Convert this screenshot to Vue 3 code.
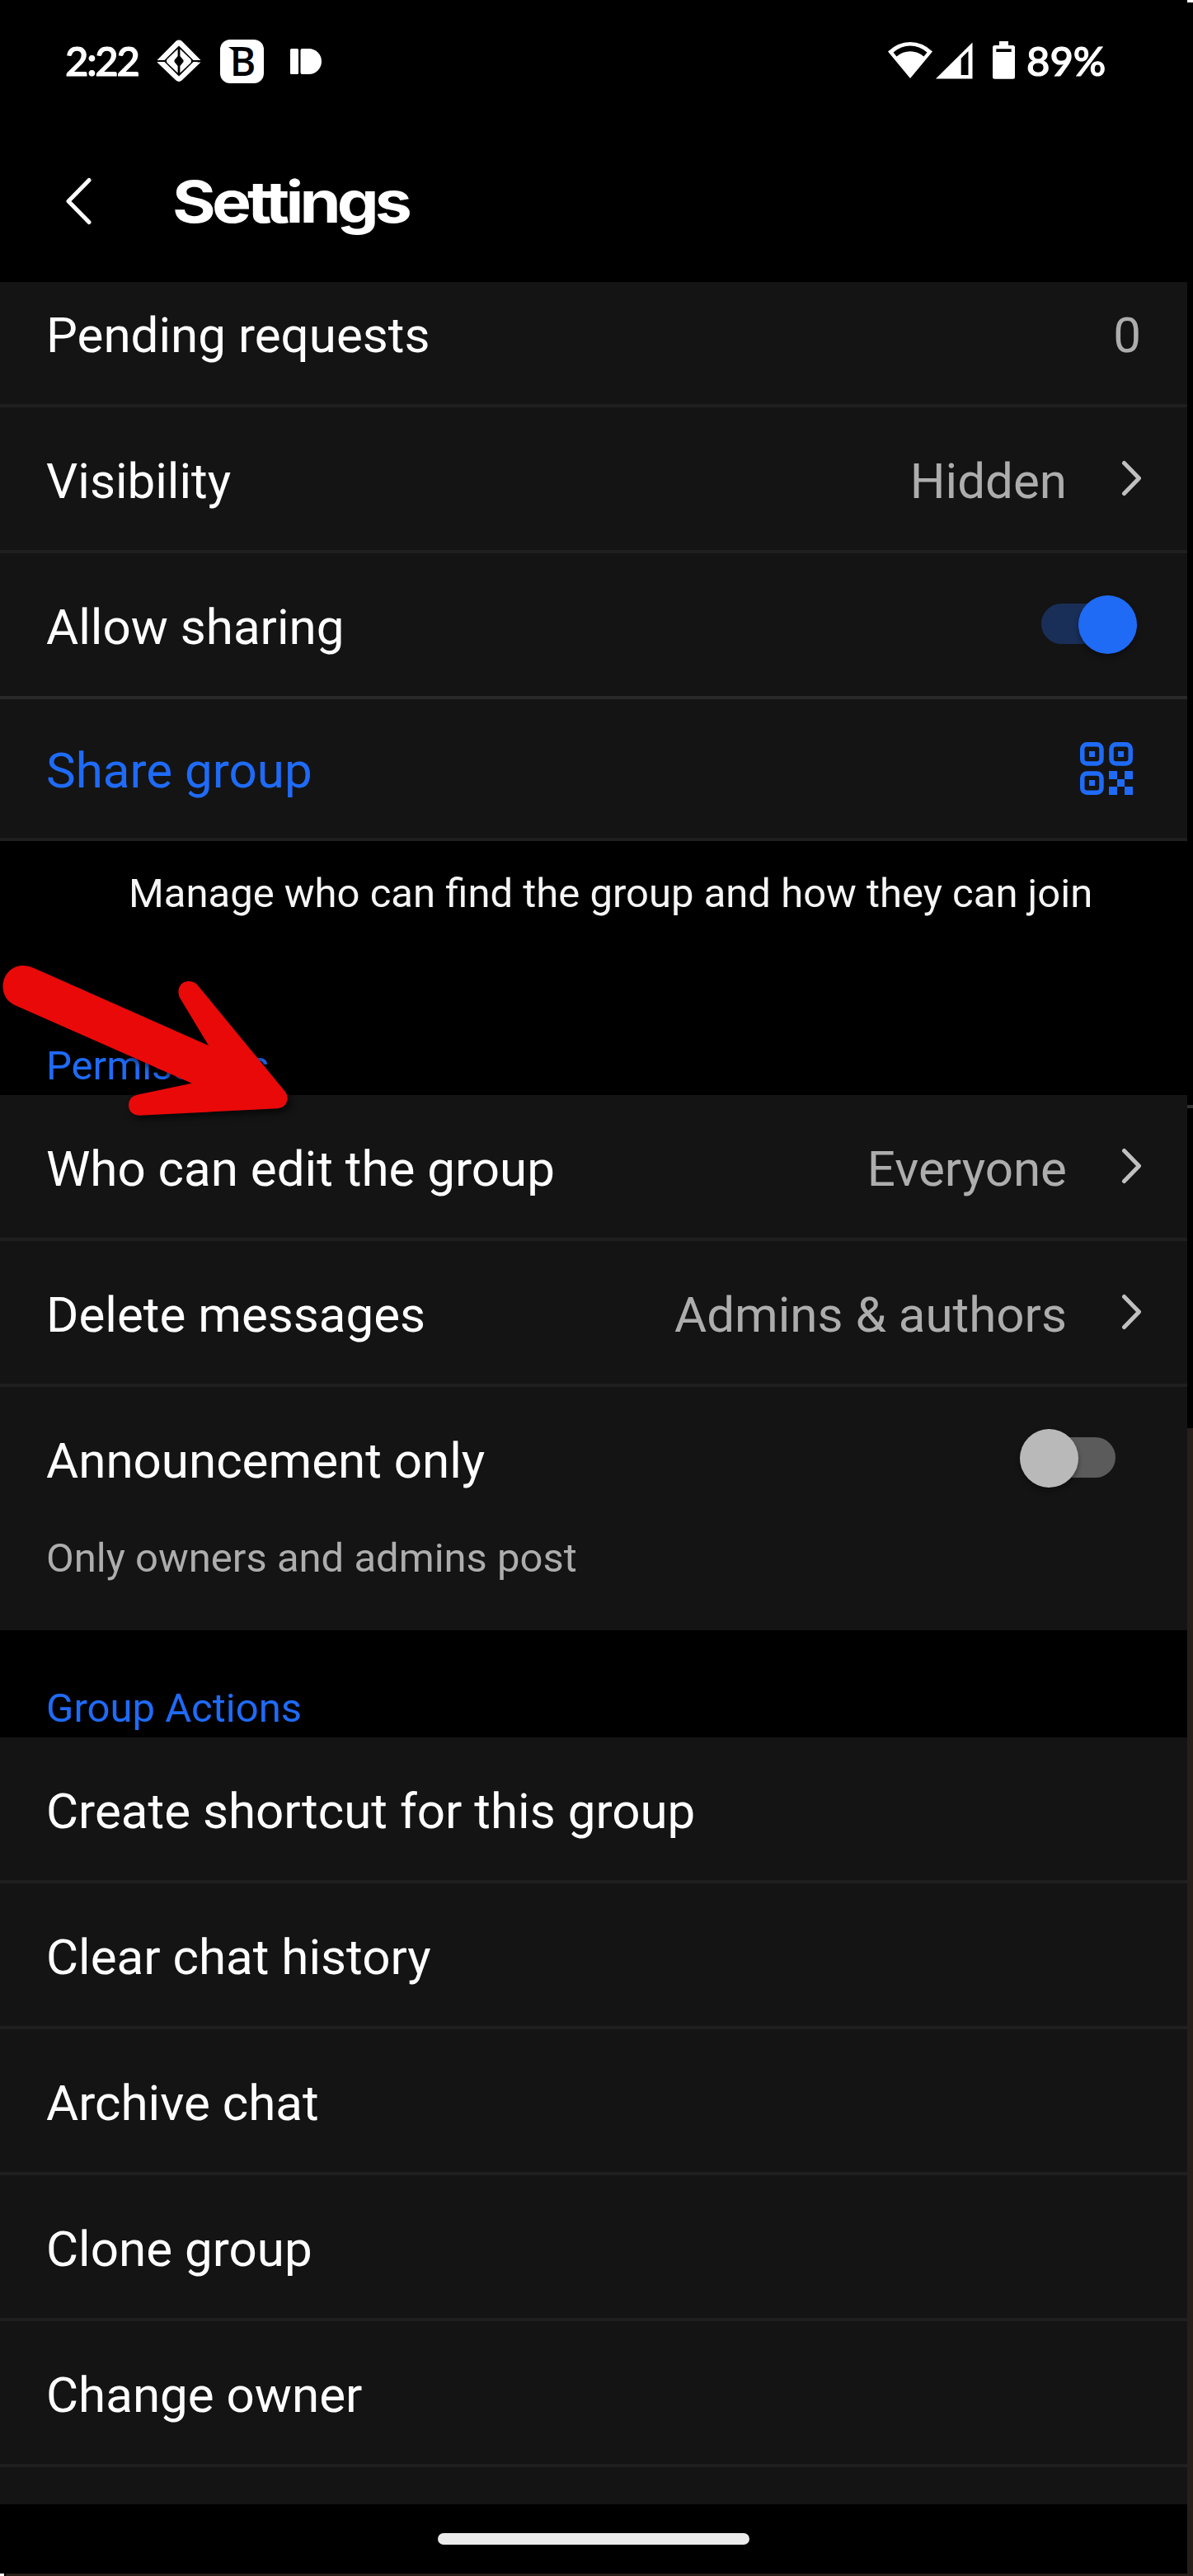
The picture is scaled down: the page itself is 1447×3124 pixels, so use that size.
<template>
  <div class="page">
    <div class="screen">
      <!-- Status bar -->
      <div class="status-bar">
        <span class="clock">2:22</span>
        <svg class="icon-diamond" width="54" height="52" viewBox="0 0 54 52">
          <path d="M23.5 1.8Q27 -0.8 30.5 1.8L53.5 25L49 27.5L53.5 27.5L30.5 49.5Q27 52.4 23.5 49.5L0.5 27.5L5 25L0.5 25Z" fill="#fff" />
          <path d="M27 7.5L45.5 26L27 44.5L8.5 26Z" fill="#000" />
          <path d="M0 26H54" stroke="#000" stroke-width="2" />
          <path d="M25.6 11.5V20L21.5 25V27L25.6 32V40.5L12.5 28Q11.5 26 12.5 24ZM28.4 11.5V20L32.5 25V27L28.4 32V40.5L41.5 28Q42.5 26 41.5 24Z" fill="#fff" />
        </svg>
        <span class="icon-b">B</span>
        <svg class="icon-bars" width="38" height="31" viewBox="0 0 38 31">
          <rect x="0" y="0" width="10" height="31" rx="1.5" fill="#fff" />
          <path d="M14.5 0H22.5A15.5 15.5 0 0 1 22.5 31H14.5Q12.5 31 12.5 29V2Q12.5 0 14.5 0Z" fill="#fff" />
        </svg>
        <div class="status-right">
          <svg class="icon-wifi" width="54" height="46" viewBox="0 0 54 46">
            <path d="M27 45L0 12.5Q12 1 27 1T54 12.5Z" fill="#fff" />
            <path d="M6.5 13.5Q16 5.5 27 5.5T47.5 13.5L43.5 18.5Q36 12.3 27 12.3T10.5 18.5Z" fill="#000" />
          </svg>
          <svg class="icon-signal" width="45" height="46" viewBox="0 0 45 46">
            <path d="M0 45.5L44.5 1.5V45.5Z" fill="#fff" />
            <path d="M30.7 20.7L39.5 12V41H30.7Z" fill="#000" />
          </svg>
          <svg class="icon-battery" width="27" height="46" viewBox="0 0 27 46">
            <path d="M8 0H19V5H24.5Q27 5 27 7.5V43.2Q27 45.7 24.5 45.7H2.5Q0 45.7 0 43.2V7.5Q0 5 2.5 5H8Z" fill="#fff" />
            <rect x="4.3" y="9.3" width="18.4" height="3.7" fill="#000" />
          </svg>
          <span class="battery-text">89%</span>
        </div>
      </div>

      <!-- Title bar -->
      <header class="title-bar">
        <svg width="32" height="58" viewBox="0 0 32 58" fill="none" stroke="#fff" stroke-width="5" stroke-linecap="round" stroke-linejoin="round">
          <path d="M29 3.5L4 29L29 54.5" />
        </svg>
        <h1 class="title">Settings</h1>
      </header>

      <section class="section">
        <div
          v-for="row in accessRows"
          :key="row.label"
          :class="['row', row.variant]"
        >
          <span class="label">{{ row.label }}</span>
          <span v-if="row.value" class="value">{{ row.value }}</span>
          <svg v-if="row.arrow" class="chevron" width="25" height="44" viewBox="0 0 25 44">
            <path d="M3.5 3.5L21.5 22L3.5 40.5" />
          </svg>
          <span v-if="row.toggle" class="toggle on"></span>
          <svg v-if="row.qr" class="qr" width="64" height="64" viewBox="0 0 64 64">
            <g fill="none" stroke="#1f6bf8" stroke-width="5.5">
              <rect x="2.75" y="2.75" width="23.2" height="23.2" rx="5.5" />
              <rect x="38" y="2.75" width="23.2" height="23.2" rx="5.5" />
              <rect x="2.75" y="38" width="23.2" height="23.2" rx="5.5" />
            </g>
            <path fill="#1f6bf8" d="M11 11h7v7h-7zM46 11h7v7h-7zM11 46h7v7h-7zM35 35h10v10h-10zM54 35h10v10h-10zM45 45h9v9h-9zM35 54h10v10h-10zM54 54h10v10h-10z" />
          </svg>
        </div>
      </section>

      <p class="hint">Manage who can find the group and how they can join</p>

      <h2 class="section-title permissions">Permissions</h2>
      <section class="section">
        <div v-for="row in permissionRows" :key="row.label" class="row">
          <span class="label">{{ row.label }}</span>
          <span class="value">{{ row.value }}</span>
          <svg class="chevron" width="25" height="44" viewBox="0 0 25 44">
            <path d="M3.5 3.5L21.5 22L3.5 40.5" />
          </svg>
        </div>
        <div class="row no-line">
          <span class="label">Announcement only</span>
          <span class="toggle off"></span>
        </div>
        <p class="description">Only owners and admins post</p>
      </section>

      <h2 class="section-title actions">Group Actions</h2>
      <section class="section last">
        <div v-for="action in actions" :key="action" class="row">
          <span class="label">{{ action }}</span>
        </div>
      </section>

      <div class="nav-bar">
        <div class="nav-handle"></div>
      </div>
    </div>

    <!-- What shows along the right edge of the window -->
    <div class="edge">
      <div class="edge-corner"></div>
      <div class="edge-line"></div>
      <div class="edge-brown"></div>
    </div>

    <div class="bottom-edge">
      <div class="bottom-corner"></div>
    </div>

    <!-- Pointer arrow -->
    <svg class="arrow" width="370" height="210" viewBox="0 1160 370 210">
      <path
        fill="#e90909"
        d="M41 1174L253 1268L217.5 1209C214 1198 220 1190 228.5 1190Q235 1190 239 1194L346 1324Q349 1328 348.5 1333.5Q347 1343 337 1344.3L169 1352.7C160 1352 156 1347 156 1340Q156.5 1330 166 1327.7L232.6 1313.7L18 1219C8 1214 3.5 1206 3.5 1196C4 1181 15 1171 28 1171Q35 1171 41 1174Z"
      />
    </svg>
  </div>
</template>

<script setup>
import { ref } from 'vue';

const accessRows = ref([
  { label: 'Pending requests', value: '0', variant: 'clipped' },
  { label: 'Visibility', value: 'Hidden', arrow: true },
  { label: 'Allow sharing', toggle: true, variant: 'strong-line' },
  { label: 'Share group', qr: true, variant: 'share' },
]);

const permissionRows = ref([
  { label: 'Who can edit the group', value: 'Everyone' },
  { label: 'Delete messages', value: 'Admins & authors' },
]);

const actions = [
  'Create shortcut for this group',
  'Clear chat history',
  'Archive chat',
  'Clone group',
  'Change owner',
];
</script>

<style>
body {
  margin: 0;
  background: #000;
}
</style>

<style scoped>
.page {
  position: relative;
  display: grid;
  grid-template-columns: 1440px 7px;
  grid-template-rows: 3121px 3px;
  width: 1447px;
  height: 3124px;
  overflow: hidden;
  background: #000;
  color: #fff;
  font-family: Roboto, sans-serif;
}

.screen {
  display: flex;
  flex-direction: column;
}

/* Status bar */
.status-bar {
  display: flex;
  align-items: flex-start;
  box-sizing: border-box;
  height: 146px;
  padding: 48px 98px 0 79px;
}

.clock,
.battery-text {
  font-family: Lato, sans-serif;
  font-size: 49px;
  font-weight: 500;
  line-height: 50px;
  white-space: nowrap;
  -webkit-text-stroke: 1.2px #fff;
}

.clock {
  width: 111px;
  letter-spacing: -2.2px;
}

.icon-b {
  position: relative;
  box-sizing: border-box;
  width: 53px;
  height: 53px;
  margin-left: 23px;
  padding-left: 2px;
  border-radius: 12px;
  background: #fff;
  color: #000;
  font-family: "Open Sans", sans-serif;
  font-size: 48px;
  font-weight: 600;
  line-height: 52px;
  text-align: center;
}

/* Small spur on the letter's top left */
.icon-b::before {
  content: "";
  position: absolute;
  top: 9px;
  left: 10px;
  border-top: 5px solid #000;
  border-left: 7px solid transparent;
}

.icon-bars {
  margin: 11px 0 0 32px;
}

.status-right {
  display: flex;
  margin-left: auto;
}

.icon-wifi {
  margin-top: 2px;
}

.icon-signal {
  margin: 2px 0 0 4px;
}

.icon-battery {
  margin: 2px 0 0 24px;
}

.battery-text {
  width: 97px;
  margin-left: 14px;
}

/* Title bar */
.title-bar {
  display: flex;
  align-items: center;
  height: 196px;
  padding-left: 79px;
}

.title {
  margin: 0 0 0 98px;
  font-family: Inter, sans-serif;
  font-size: 70px;
  font-weight: 700;
  letter-spacing: -4.2px;
  transform: scaleX(1.15);
  transform-origin: left center;
}

/* Lists */
.section {
  background: #141414;
}

.row {
  display: flex;
  align-items: center;
  box-sizing: border-box;
  height: 177px;
  padding: 6px 55px 0 56px;
  border-bottom: 4px solid #1f1f1f;
  font-size: 60.1px;
  line-height: 70px;
}

.row.clipped {
  height: 152px;
  padding: 0 56px 19px;
}

.row.strong-line {
  border-bottom-color: #292929;
}

.row.share {
  height: 172px;
  padding: 5px 66px 0 56px;
  color: #1f6bf8;
}

.row.no-line {
  border-bottom-color: transparent;
}

.label {
  flex: 1;
}

.value {
  color: #adadad;
}

.chevron {
  margin: -7px 0 0 66px;
  fill: none;
  stroke: #c0c0c0;
  stroke-width: 5;
  stroke-linecap: round;
  stroke-linejoin: round;
}

.qr {
  margin-top: -5px;
}

.toggle {
  position: relative;
  width: 116px;
  height: 71px;
  margin-top: -6px;
}

.toggle::before {
  content: "";
  position: absolute;
  top: 10px;
  width: 98px;
  height: 49px;
  border-radius: 25px;
}

.toggle::after {
  content: "";
  position: absolute;
  top: 0;
  width: 71px;
  height: 71px;
  border-radius: 50%;
  box-shadow: 0 4px 6px rgba(0, 0, 0, 0.35);
}

.toggle.on {
  margin-right: 6px;
}

.toggle.on::before {
  left: 0;
  background: #192f58;
}

.toggle.on::after {
  right: 0;
  background: #1f6bf6;
}

.toggle.off {
  margin-right: 32px;
}

.toggle.off::before {
  right: 0;
  background: #5b5b5b;
}

.toggle.off::after {
  left: 0;
  background: #b9b9b9;
}

.hint {
  height: 208px;
  margin: 0;
  padding-top: 34px;
  box-sizing: border-box;
  padding-left: 156px;
  color: #f5f5f5;
  font-size: 49px;
  line-height: 60px;
}

.section-title {
  box-sizing: border-box;
  margin: 0;
  padding-left: 56px;
  color: #1f6bf8;
  font-size: 49px;
  font-weight: 400;
  line-height: 60px;
}

.section-title.permissions {
  height: 100px;
  padding-top: 35px;
}

.section-title.actions {
  height: 130px;
  padding-top: 65px;
}

.description {
  box-sizing: border-box;
  height: 118px;
  margin: 0;
  padding: 1px 56px 0;
  color: #adadad;
  font-size: 49px;
  line-height: 60px;
}

.last {
  height: 930px;
}

/* Gesture bar */
.nav-bar {
  display: flex;
  align-items: center;
  justify-content: center;
  height: 84px;
}

.nav-handle {
  width: 378px;
  height: 14px;
  border-radius: 7px;
  background: #ebebeb;
}

/* Window edges */
.edge {
  display: flex;
  flex-direction: column;
}

.edge-corner {
  height: 3px;
  background: #fff;
}

.edge-line {
  height: 4px;
  margin-top: 1337px;
  background: #333;
}

.edge-brown {
  flex: 1;
  margin-top: 388px;
  background: #281e19;
}

.bottom-edge {
  grid-column: 1 / 3;
  background: #281e19;
}

.bottom-corner {
  width: 5px;
  height: 3px;
  border-right: 2px solid #000;
  background: #fff;
}

.arrow {
  position: absolute;
  top: 1160px;
  left: 0;
  filter: drop-shadow(4px 5px 4px rgba(0, 0, 0, 0.6));
}
</style>
